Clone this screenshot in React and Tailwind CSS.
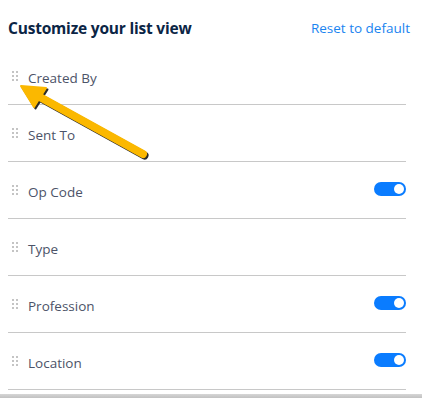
import React from "react";

const rows = [
  { label: "Created By", toggle: false },
  { label: "Sent To", toggle: false },
  { label: "Op Code", toggle: true },
  { label: "Type", toggle: false },
  { label: "Profession", toggle: true },
  { label: "Location", toggle: true },
];

function Handle() {
  return (
    <div className="grid grid-cols-2 gap-x-[2px] gap-y-[2px] w-[6px] mt-[-4px]">
      {Array.from({ length: 6 }).map((_, i) => (
        <span key={i} className="block w-[2px] h-[2px] bg-[#c4c4c4]" />
      ))}
    </div>
  );
}

function Toggle() {
  return (
    <div className="relative w-[32px] h-[14px] rounded-full bg-[#0a7cff] mt-[-6px]">
      <span className="absolute right-[2px] top-[2px] w-[10px] h-[10px] rounded-full bg-white" />
    </div>
  );
}

function Arrow() {
  return (
    <svg
      className="absolute left-0 top-0 pointer-events-none"
      width="422"
      height="398"
      viewBox="0 0 422 398"
    >
      <g transform="translate(1.5,1.5)" fill="#2a2a2a" stroke="#2a2a2a">
        <line x1="38" y1="96" x2="143" y2="154" strokeWidth="8" strokeLinecap="round" />
        <polygon points="21,86 46,88 34,107" strokeWidth="2" strokeLinejoin="round" />
      </g>
      <g fill="#fbb800" stroke="#fbb800">
        <line x1="38" y1="96" x2="143" y2="154" strokeWidth="8" strokeLinecap="round" />
        <polygon points="21,86 46,88 34,107" strokeWidth="2" strokeLinejoin="round" />
      </g>
    </svg>
  );
}

export default function App() {
  return (
    <div
      className="relative w-[422px] h-[398px] bg-white overflow-hidden"
      style={{ fontFamily: '"Open Sans", "Noto Sans", sans-serif' }}
    >
      <div className="flex justify-between pl-[8px] pr-[12px] pt-[18px] h-[48px] items-start">
        <h1 className="text-[15.5px] font-bold text-[#0b2545] leading-[20px] tracking-[-0.2px]">
          Customize your list view
        </h1>
        <button className="text-[13.5px] text-[#1a84f0] leading-[20px] font-medium">
          Reset to default
        </button>
      </div>
      <div className="pl-[8px] pr-[16px]">
        {rows.map((r) => (
          <div
            key={r.label}
            className="flex items-center h-[57px] border-b border-[#c8c8c8] pt-[4px]"
          >
            <div className="w-[20px] pl-[4px]">
              <Handle />
            </div>
            <span className="flex-1 text-[13.5px] text-[#4c5368] leading-[20px]">
              {r.label}
            </span>
            {r.toggle && <Toggle />}
          </div>
        ))}
      </div>
      <div className="mt-[4px] h-[5px] bg-gradient-to-b from-[#d6d6d6] to-[#bcbcbc]" />
      <Arrow />
    </div>
  );
}
